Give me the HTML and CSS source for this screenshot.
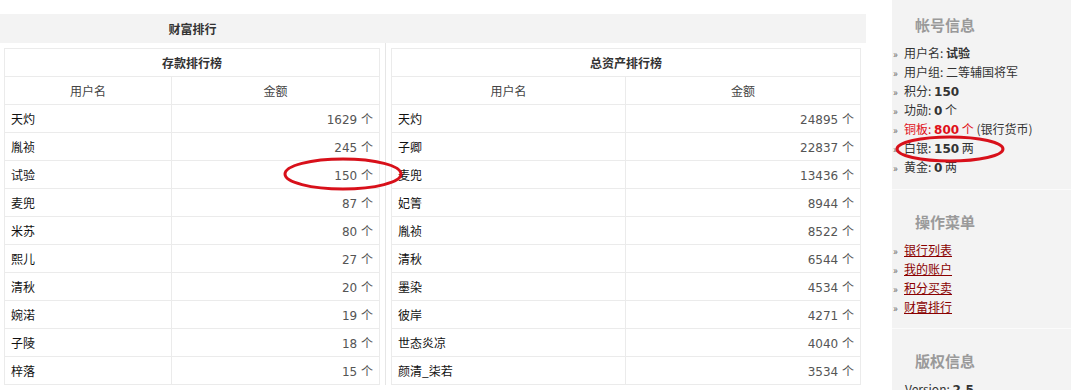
FILE: index.html
```html
<!DOCTYPE html>
<html lang="zh-CN">
<head>
<meta charset="utf-8">
<title>财富排行</title>
<link rel="stylesheet" href="styles.css">
</head>
<body>
<div class="page">
  <div class="main">
    <div class="main-head"><div class="main-title">财富排行</div></div>
    <div class="boards">
      <div class="board board-left">
        <table class="rank rank-left">
          <colgroup><col class="col-name"><col class="col-amount"></colgroup>
          <tr><th colspan="2" class="cap">存款排行榜</th></tr>
          <tr><td class="hd">用户名</td><td class="hd">金额</td></tr>
          <tr><td>天灼</td><td class="num">1629 个</td></tr>
          <tr><td>胤祯</td><td class="num">245 个</td></tr>
          <tr><td>试验</td><td class="num">150 个</td></tr>
          <tr><td>麦兜</td><td class="num">87 个</td></tr>
          <tr><td>米苏</td><td class="num">80 个</td></tr>
          <tr><td>熙儿</td><td class="num">27 个</td></tr>
          <tr><td>清秋</td><td class="num">20 个</td></tr>
          <tr><td>婉渃</td><td class="num">19 个</td></tr>
          <tr><td>子陵</td><td class="num">18 个</td></tr>
          <tr><td>梓落</td><td class="num">15 个</td></tr>
        </table>
      </div>
      <div class="board board-right">
        <table class="rank rank-right">
          <colgroup><col class="col-name"><col class="col-amount"></colgroup>
          <tr><th colspan="2" class="cap">总资产排行榜</th></tr>
          <tr><td class="hd">用户名</td><td class="hd">金额</td></tr>
          <tr><td>天灼</td><td class="num">24895 个</td></tr>
          <tr><td>子卿</td><td class="num">22837 个</td></tr>
          <tr><td>麦兜</td><td class="num">13436 个</td></tr>
          <tr><td>妃箐</td><td class="num">8944 个</td></tr>
          <tr><td>胤祯</td><td class="num">8522 个</td></tr>
          <tr><td>清秋</td><td class="num">6544 个</td></tr>
          <tr><td>墨染</td><td class="num">4534 个</td></tr>
          <tr><td>彼岸</td><td class="num">4271 个</td></tr>
          <tr><td>世态炎凉</td><td class="num">4040 个</td></tr>
          <tr><td>颜清_柒若</td><td class="num">3534 个</td></tr>
        </table>
      </div>
    </div>
  </div>
  <aside class="side">
    <section class="side-section">
      <h3 class="side-title">帐号信息</h3>
      <ul class="side-list">
        <li>用户名: <b>试验</b></li>
        <li>用户组: 二等辅国将军</li>
        <li>积分: <b>150</b></li>
        <li>功勋: <b>0</b> 个</li>
        <li><span class="red">铜板: <b>800</b> 个</span> (银行货币)</li>
        <li>白银: <b>150</b> 两</li>
        <li>黄金: <b>0</b> 两</li>
      </ul>
    </section>
    <section class="side-section">
      <h3 class="side-title">操作菜单</h3>
      <ul class="side-list">
        <li><a href="#">银行列表</a></li>
        <li><a href="#">我的账户</a></li>
        <li><a href="#">积分买卖</a></li>
        <li><a href="#">财富排行</a></li>
      </ul>
    </section>
    <section class="side-section">
      <h3 class="side-title">版权信息</h3>
      <ul class="side-list plain">
        <li>Version: <b>2.5</b></li>
      </ul>
    </section>
  </aside>
  <svg class="mark mark-1" width="124" height="36" viewBox="0 0 124 36"><ellipse cx="62" cy="18" rx="58" ry="15" fill="none" stroke="#d8101a" stroke-width="3"/></svg>
  <svg class="mark mark-2" width="114" height="30" viewBox="0 0 114 30"><ellipse cx="57" cy="15" rx="53" ry="12" fill="none" stroke="#d8101a" stroke-width="3"/></svg>
</div>
</body>
</html>
```

FILE: styles.css
```css
html, body {
  margin: 0;
  padding: 0;
  background: #fff;
}

body {
  font-family: "DejaVu Sans", "Noto Sans CJK SC", sans-serif;
  font-size: 12px;
  color: #333;
}

.page {
  position: relative;
  display: flex;
  width: 1071px;
  height: 390px;
  overflow: hidden;
}

.main {
  width: 866px;
  margin-top: 14px;
  flex: none;
}

.main-head {
  height: 29px;
  background: #f3f3f3;
  display: flex;
  align-items: center;
}

.main-title {
  width: 385px;
  text-align: center;
  font-family: "Noto Sans CJK SC", sans-serif;
  font-weight: bold;
  font-size: 12px;
  color: #333;
}

.boards {
  display: flex;
}

.board {
  padding-top: 5px;
}

.board-left {
  width: 376px;
  padding-left: 4px;
  padding-right: 5px;
  border-right: 1px solid #e6e6e6;
}

.board-right {
  width: 470px;
  padding-left: 5px;
  padding-right: 5px;
}

.rank {
  width: 100%;
  border-collapse: collapse;
  table-layout: fixed;
}

.rank-left .col-name { width: 167px; }
.rank-right .col-name { width: 234px; }

.rank th,
.rank td {
  border: 1px solid #ebebeb;
  height: 28px;
  padding: 0 6px;
  box-sizing: border-box;
  font-family: "Noto Sans CJK SC", sans-serif;
  font-size: 12px;
  color: #111;
  text-align: left;
  white-space: nowrap;
}

.rank th.cap {
  text-align: center;
  font-weight: bold;
  color: #333;
}

.rank td.hd {
  text-align: center;
  color: #444;
}

.rank td.num {
  text-align: right;
  font-family: "DejaVu Sans", "Noto Sans CJK SC", sans-serif;
  color: #555;
}

.side {
  width: 179px;
  margin-left: 26px;
  background: #f3f3f3;
  flex: none;
}

.side-section {
  padding: 21px 0 12px;
  border-bottom: 1px solid #fbfbfb;
}

.side-section:first-child {
  padding-top: 14px;
  padding-bottom: 13px;
}

.side-title {
  margin: 0 0 7px 23px;
  height: 22px;
  font-family: "Noto Sans CJK SC", sans-serif;
  font-size: 15px;
  line-height: 22px;
  font-weight: bold;
  color: #9a9a9a;
}

.side-list {
  list-style: none;
  margin: 0;
  padding: 0 0 0 1px;
}

.side-list li {
  height: 19px;
  line-height: 19px;
  font-family: "Noto Sans CJK SC", sans-serif;
  color: #333;
  white-space: nowrap;
}

.side-list li::before {
  content: "»";
  display: inline-block;
  width: 11px;
  font-size: 10px;
  line-height: 10px;
  color: #666;
}

.side-list b {
  font-family: "DejaVu Sans", "Noto Sans CJK SC", sans-serif;
  font-weight: bold;
  line-height: 10px;
  color: #333;
}

.side-list .red,
.side-list .red b {
  color: #e0101a;
}

.side-list a {
  color: #8a0000;
  text-decoration: underline;
}

.side-list.plain li::before {
  content: "";
  width: 12px;
}

.mark {
  position: absolute;
}

.mark-1 {
  left: 281px;
  top: 156px;
}

.mark-2 {
  left: 893px;
  top: 134px;
}
```
